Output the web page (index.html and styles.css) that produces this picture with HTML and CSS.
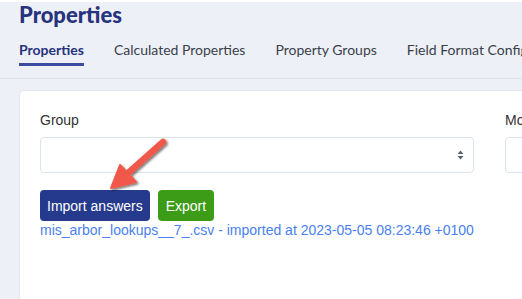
FILE: index.html
```html
<!DOCTYPE html>
<html lang="en">
<head>
  <meta charset="UTF-8">
  <title>Properties</title>
  <link rel="stylesheet" href="styles.css">
</head>
<body>
  <div class="page-header">
    <h1 class="page-title">Properties</h1>
    <nav class="tabs">
      <a class="tab active">Properties</a>
      <a class="tab">Calculated Properties</a>
      <a class="tab">Property Groups</a>
      <a class="tab">Field Format Configuration</a>
    </nav>
  </div>

  <div class="content">
    <div class="card">
      <div class="filters">
        <div class="field group-field">
          <label>Group</label>
          <div class="select-box">
            <span class="select-arrows">
              <svg width="7" height="10" viewBox="0 0 7 10"><path d="M3.5 0.5 L6.5 4 H0.5 Z M3.5 9.5 L6.5 6 H0.5 Z" fill="#5a6270"/></svg>
            </span>
          </div>
        </div>
        <div class="field mode-field">
          <label>Mode</label>
          <div class="select-box"></div>
        </div>
      </div>

      <div class="actions">
        <button class="btn btn-primary">Import answers</button>
        <button class="btn btn-success">Export</button>
      </div>
      <a class="import-link">mis_arbor_lookups__7_.csv - imported at 2023-05-05 08:23:46 +0100</a>

      <svg class="annotation" width="80" height="70" viewBox="0 0 80 70">
        <defs>
          <filter id="shadow" x="-20%" y="-20%" width="150%" height="150%">
            <feDropShadow dx="1.5" dy="1.5" stdDeviation="1.2" flood-color="#000" flood-opacity="0.55"/>
          </filter>
        </defs>
        <g filter="url(#shadow)">
          <line x1="62" y1="8" x2="26" y2="40" stroke="#f0584a" stroke-width="6.5" stroke-linecap="round"/>
          <path d="M10 54 L19 31 L35 48 Z" fill="#f0584a" stroke="#f0584a" stroke-width="2" stroke-linejoin="round"/>
        </g>
      </svg>
    </div>
  </div>
</body>
</html>
```

FILE: styles.css
```css
body {
  margin: 0;
  background-color: #edf0f7;
  font-family: 'Liberation Sans', Arial, sans-serif;
  color: #333;
  overflow: hidden;
  border-top: 2px solid #fff;
  height: 297px;
}

.page-header {
  padding: 0 0 0 19px;
  border-bottom: 1px solid #dde1ea;
}

.page-title {
  margin: 0;
  font-family: 'Lato', sans-serif;
  font-size: 22px;
  font-weight: 900;
  line-height: 26px;
  color: #27337d;
}

.tabs {
  display: flex;
  gap: 30px;
  padding-top: 13px;
  white-space: nowrap;
}

.tab {
  font-family: 'Lato', sans-serif;
  font-size: 14px;
  line-height: 18px;
  color: #3a3f4a;
  padding-bottom: 4px;
  border-bottom: 3px solid transparent;
  margin-bottom: 12px;
}

.tab.active {
  font-weight: 700;
  color: #27337d;
  border-bottom-color: #3a4ba0;
}

.content {
  padding: 11px 0 0 19px;
}

.card {
  position: relative;
  background: #fff;
  border-radius: 5px 0 0 0;
  border: 1px solid #e3e7ef;
  border-right: none;
  border-bottom: none;
  padding: 21px 0 0 20px;
  height: 220px;
  box-sizing: border-box;
}

.filters {
  display: flex;
  gap: 31px;
  width: 700px;
}

.field label {
  display: block;
  font-size: 14px;
  color: #333;
  margin-bottom: 9px;
}

.group-field {
  flex: 0 0 434px;
}

.mode-field {
  flex: 0 0 200px;
}

.select-box {
  height: 36px;
  border: 1px solid #dde3ea;
  border-radius: 4px;
  box-sizing: border-box;
  display: flex;
  align-items: center;
  justify-content: flex-end;
  padding-right: 9px;
}

.select-arrows {
  display: flex;
}

.actions {
  display: flex;
  gap: 8px;
  margin-top: 17px;
}

.btn {
  font-family: 'Liberation Sans', Arial, sans-serif;
  font-size: 14px;
  color: #fff;
  border: none;
  border-radius: 4px;
  height: 31px;
  padding: 0 7px;
  white-space: nowrap;
}

.btn-primary {
  background-color: #263a8d;
}

.btn-success {
  background-color: #3c9c17;
  padding: 0 8px;
}

.import-link {
  display: block;
  font-size: 14px;
  color: #4a7ff0;
  margin-top: 1px;
  white-space: nowrap;
}

.annotation {
  position: absolute;
  left: 81px;
  top: 43px;
}
```
